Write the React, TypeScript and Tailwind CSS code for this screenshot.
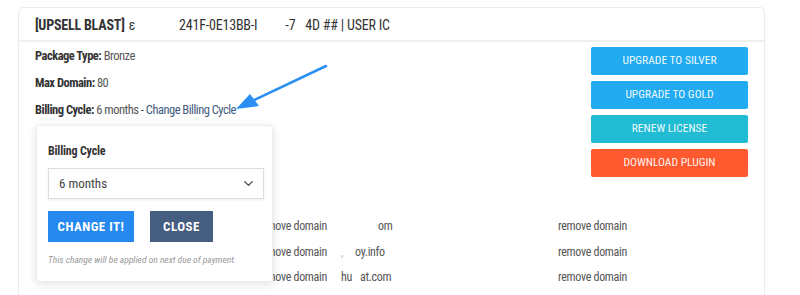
import React from 'react';
import { ChevronDown } from 'lucide-react';

const actions = [
  { label: 'UPGRADE TO SILVER', cls: 'bg-[#22abf0]' },
  { label: 'UPGRADE TO GOLD', cls: 'bg-[#22abf0]' },
  { label: 'RENEW LICENSE', cls: 'bg-[#21bcd4]' },
  { label: 'DOWNLOAD PLUGIN', cls: 'bg-[#ff5a2f]' },
];

// domain names are partly masked in the screenshot
const domains = [
  <span className="ml-[37px]">om</span>,
  <><span className="text-[#bbb]">,</span><span className="ml-[12px]">oy.info</span></>,
  <><span>hu</span><span className="ml-[8px]">at.com</span></>,
];

export default function App() {
  return (
    <div className="relative h-[295px] w-[800px] overflow-hidden bg-white pl-[18px] pt-[7px] font-['Roboto',sans-serif] font-stretch-condensed">
      <div className="relative h-[300px] w-[747px] rounded-[5px] border border-[#ececec]">
        {/* Header */}
        <div className="flex h-[34px] items-center whitespace-nowrap border-b-2 border-[#f0f0f0] px-[16px] pt-[2px] text-[14px] font-bold tracking-[-0.2px] text-[#333]">
          <span>[UPSELL BLAST]</span>
          <span className="ml-[4px] font-normal">ε</span>
          <span className="ml-[44px] font-normal">241F-0E13BB-I</span>
          <span className="ml-[28px] font-normal">-7</span>
          <span className="ml-[10px] font-normal">4D ## | USER IC</span>
        </div>

        {/* Body */}
        <div className="flex px-[16px]">
          <div className="min-w-0 flex-1 whitespace-nowrap text-[12.5px] leading-[27px] tracking-[-0.5px] text-[#555]">
            <div><b className="text-[#333]">Package Type:</b> Bronze</div>
            <div><b className="text-[#333]">Max Domain:</b> 80</div>
            <div>
              <b className="text-[#333]">Billing Cycle:</b> 6 months -{' '}
              <span className="text-[#3f5b7d]">Change Billing Cycle</span>
            </div>

            <div className="mt-[91px] text-[12px] leading-[25.5px] tracking-[-0.3px]">
              {domains.map((d, i) => (
                <div key={i} className="flex">
                  <div className="w-[223px] shrink-0" />
                  <div className="w-[83px] shrink-0">remove domain</div>
                  <div className="w-[217px] shrink-0">{d}</div>
                  <div className="shrink-0">remove domain</div>
                </div>
              ))}
            </div>
          </div>

          <div className="mt-[5px] flex w-[157px] shrink-0 flex-col gap-[6px]">
            {actions.map((a) => (
              <button
                key={a.label}
                className={`h-[28px] rounded-[2px] text-[11.5px] text-white/95 ${a.cls}`}
              >
                {a.label}
              </button>
            ))}
          </div>
        </div>

        {/* Billing cycle popover */}
        <div className="absolute left-[17px] top-[117px] h-[157px] w-[237px] rounded-[3px] border border-[#eee] bg-white px-[11px] pt-[17px] shadow-[0_2px_10px_rgba(0,0,0,0.12)]">
          <div className="text-[12px] font-bold leading-[16px] tracking-[-0.2px] text-[#333]">Billing Cycle</div>
          <div className="mt-[9px] flex h-[31px] w-[216px] items-center justify-between border border-[#ddd] pl-[10px] pr-[7px] text-[13px] text-[#444] shadow-[0_1px_2px_rgba(0,0,0,0.08)]">
            <span>6 months</span>
            <ChevronDown className="h-[15px] w-[15px] text-[#444]" strokeWidth={2} />
          </div>
          <div className="mt-[12px] flex gap-[16px]">
            <button className="h-[31px] w-[86px] bg-[#2589ef] text-[13px] font-bold tracking-[0.5px] text-white">
              CHANGE IT!
            </button>
            <button className="h-[31px] w-[63px] bg-[#455d80] text-[13px] font-bold tracking-[0.5px] text-white">
              CLOSE
            </button>
          </div>
          <div className="mt-[11px] whitespace-nowrap text-[9.5px] italic text-[#999]">
            This change will be applied on next due of payment.
          </div>
        </div>
      </div>

      {/* Annotation arrow */}
      <svg className="pointer-events-none absolute left-0 top-0" width="800" height="295">
        <line x1="326" y1="66" x2="248" y2="103" stroke="#2a8ff2" strokeWidth="2.5" strokeLinecap="round" />
        <polygon points="236,109 250,94 259,106" fill="#2a8ff2" />
      </svg>
    </div>
  );
}
